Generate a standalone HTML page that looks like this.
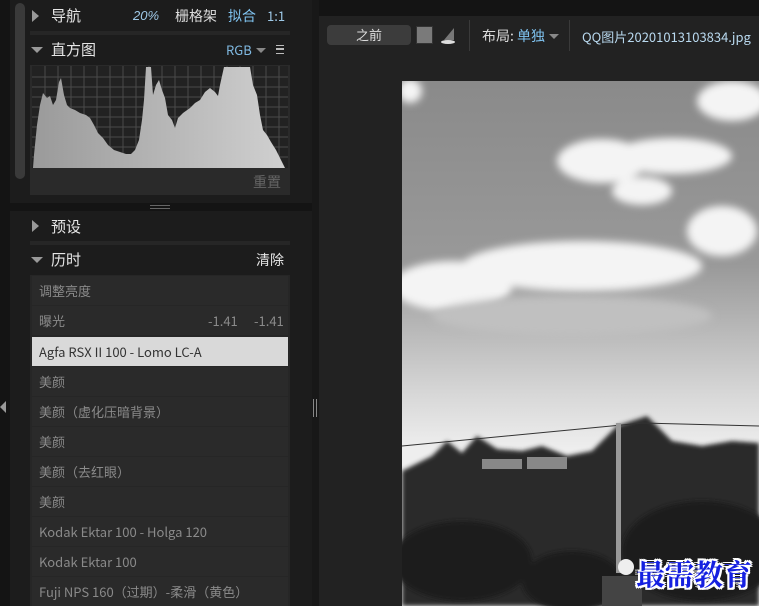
<!DOCTYPE html>
<html><head><meta charset="utf-8"><style>
*{margin:0;padding:0;box-sizing:border-box}
body{width:759px;height:606px;background:#141414;position:relative;overflow:hidden;font-family:"Noto Sans CJK SC","Liberation Sans",sans-serif;color:#ddd}
.a{position:absolute}
.t{font-size:15px;color:#e6e6e6;line-height:20px}
.tri{width:0;height:0;position:absolute}
.row{position:absolute;left:32px;width:256px;height:29px;background:#2a2a2a;font-size:13px;color:#8a8a8a;padding-left:7px;line-height:29px}
</style></head><body>
<div class="a" style="left:10px;top:0;width:302px;height:606px;background:#1c1c1c"></div>
<div class="a" style="left:0;top:0;width:10px;height:606px;background:#141414"></div>
<div class="a" style="left:15px;top:3px;width:10px;height:176px;background:#3a3a3a;border-radius:5px"></div>
<div class="tri" style="left:32px;top:10px;border-left:7px solid #999;border-top:6px solid transparent;border-bottom:6px solid transparent"></div>
<div class="a t" style="left:51px;top:6px">导航</div>
<div class="a" style="left:133px;top:7px;font-size:13px;font-style:italic;color:#9ec8e6;font-family:'Liberation Sans',sans-serif;line-height:18px">20%</div>
<div class="a" style="left:175px;top:6px;font-size:14px;color:#ddd;line-height:20px">栅格架</div>
<div class="a" style="left:228px;top:6px;font-size:14px;color:#7fc3f0;line-height:20px">拟合</div>
<div class="a" style="left:267px;top:7px;font-size:13px;color:#9ec8e6;line-height:18px">1:1</div>
<div class="a" style="left:30px;top:31px;width:260px;height:4px;background:#262626"></div>
<div class="tri" style="left:31px;top:47px;border-top:6px solid #999;border-left:6px solid transparent;border-right:6px solid transparent"></div>
<div class="a t" style="left:51px;top:40px">直方图</div>
<div class="a" style="left:226px;top:41px;font-size:13px;color:#7fb8e0;line-height:18px">RGB</div>
<div class="tri" style="left:256px;top:48px;border-top:5px solid #888;border-left:5px solid transparent;border-right:5px solid transparent"></div>
<div class="a" style="left:276px;top:45px;width:8px;height:9px;border-top:1px solid #bbb;border-bottom:1px solid #bbb"></div>
<div class="a" style="left:276px;top:48px;width:8px;height:2px;border-top:1px solid #bbb;border-bottom:1px solid #bbb"></div>
<div class="a" style="left:30px;top:65px;width:260px;height:130px;background:#2a2a2a"></div>
<svg class="a" style="left:32px;top:66px" width="256" height="102" viewBox="32 66 256 102">
<rect x="32" y="66" width="256" height="102" fill="#222"/>
<g stroke="#4a4a4a" stroke-width="1">
<path d="M32 77H288M32 87H288M32 97H288M32 107H288M32 117H288M32 127H288M32 137H288M32 147H288M32 157H288"/>
<path d="M45 66V168M58 66V168M71 66V168M84 66V168M97 66V168M110 66V168M123 66V168M136 66V168M149 66V168M162 66V168M175 66V168M188 66V168M201 66V168M214 66V168M227 66V168M240 66V168M253 66V168M266 66V168M279 66V168"/>
</g>
<defs><linearGradient id="hg" x1="0" x2="1"><stop offset="0" stop-color="#9a9a9a"/><stop offset="1" stop-color="#d0d0d0"/></linearGradient></defs>
<path fill="url(#hg)" d="M33 168L34 155L37 125L40 105L43 93L47 98L50 96L53 105L56 100L59 82L61 78L64 95L67 105L70 108L75 110L80 113L86 115L90 118L94 125L98 133L103 138L108 145L114 150L120 152L126 154L131 154L135 150L139 140L142 120L144 100L146 67L151 67L153 95L156 85L159 80L162 90L165 98L168 115L172 120L175 128L178 118L183 113L190 108L195 103L200 100L205 92L210 88L215 92L218 96L220 85L224 67L250 67L253 85L257 95L260 115L263 130L267 135L271 142L276 150L281 160L285 168Z"/>
</svg>
<div class="a" style="left:253px;top:172px;font-size:14px;color:#666;line-height:20px">重置</div>
<div class="a" style="left:10px;top:203px;width:302px;height:8px;background:#141414"></div>
<div class="a" style="left:150px;top:205px;width:20px;height:4px;border-top:1px solid #666;border-bottom:1px solid #666"></div>
<div class="tri" style="left:32px;top:220px;border-left:7px solid #999;border-top:6px solid transparent;border-bottom:6px solid transparent"></div>
<div class="a t" style="left:51px;top:217px">预设</div>
<div class="a" style="left:30px;top:241px;width:260px;height:4px;background:#262626"></div>
<div class="tri" style="left:31px;top:257px;border-top:6px solid #999;border-left:6px solid transparent;border-right:6px solid transparent"></div>
<div class="a t" style="left:51px;top:250px">历时</div>
<div class="a" style="left:256px;top:250px;font-size:14px;color:#e6e6e6;line-height:20px">清除</div>
<div class="a" style="left:30px;top:275px;width:260px;height:331px;background:#262626"></div>
<div class="row" style="top:276px">调整亮度</div>
<div class="row" style="top:306px">曝光<span style="position:absolute;left:176px">-1.41</span><span style="position:absolute;left:222px">-1.41</span></div>
<div class="row" style="top:337px;height:29px;background:#d9d9d9;color:#333">Agfa RSX II 100 - Lomo LC-A</div>
<div class="row" style="top:367px">美颜</div>
<div class="row" style="top:397px">美颜（虚化压暗背景）</div>
<div class="row" style="top:427px">美颜</div>
<div class="row" style="top:457px">美颜（去红眼）</div>
<div class="row" style="top:487px">美颜</div>
<div class="row" style="top:517px">Kodak Ektar 100 - Holga 120</div>
<div class="row" style="top:547px">Kodak Ektar 100</div>
<div class="row" style="top:577px">Fuji NPS 160（过期）-柔滑（黄色）</div>
<div class="tri" style="left:0;top:401px;border-right:6px solid #999;border-top:6px solid transparent;border-bottom:6px solid transparent"></div>
<div class="a" style="left:312px;top:0;width:7px;height:606px;background:#181818"></div>
<div class="a" style="left:313px;top:399px;width:4px;height:18px;border-left:1px solid #888;border-right:1px solid #888"></div>
<div class="a" style="left:319px;top:16px;width:440px;height:590px;background:#222"></div>
<div class="a" style="left:327px;top:25px;width:84px;height:20px;background:#3c3c3c;border-radius:4px;font-size:13px;color:#ddd;text-align:center;line-height:20px">之前</div>
<div class="a" style="left:416px;top:26px;width:17px;height:18px;background:#7a7a7a;border:1px solid #333"></div>
<svg class="a" style="left:438px;top:26px" width="20" height="20"><path d="M16 2L16 14L6 14Z" fill="#777"/><ellipse cx="10" cy="16" rx="7" ry="2" fill="#ddd"/></svg>
<div class="a" style="left:469px;top:20px;width:1px;height:31px;background:#3a3a3a"></div>
<div class="a" style="left:482px;top:26px;font-size:14px;color:#ddd;line-height:20px">布局: <span style="color:#7fc3f0">单独</span></div>
<div class="tri" style="left:549px;top:34px;border-top:5px solid #888;border-left:5px solid transparent;border-right:5px solid transparent"></div>
<div class="a" style="left:569px;top:20px;width:1px;height:31px;background:#3a3a3a"></div>
<div class="a" style="left:582px;top:27px;font-size:13px;color:#b8d8ee;line-height:20px">QQ图片20201013103834.jpg</div>
<svg class="a" style="left:402px;top:81px" width="357" height="525">
<defs>
<linearGradient id="sky" x1="0" y1="0" x2="0" y2="1"><stop offset="0" stop-color="#8a8a8a"/><stop offset="0.35" stop-color="#999"/><stop offset="0.6" stop-color="#d8d8d8"/><stop offset="0.7" stop-color="#eee"/></linearGradient>
<filter id="b"><feGaussianBlur stdDeviation="4"/></filter>
<filter id="b2"><feGaussianBlur stdDeviation="2"/></filter>
</defs>
<rect width="357" height="525" fill="url(#sky)"/>
<g filter="url(#b)" fill="#f4f4f4">
<ellipse cx="200" cy="80" rx="45" ry="22"/><ellipse cx="270" cy="75" rx="60" ry="18"/><ellipse cx="240" cy="110" rx="30" ry="14"/>
<ellipse cx="180" cy="185" rx="120" ry="25"/><ellipse cx="50" cy="205" rx="60" ry="25"/><ellipse cx="320" cy="150" rx="35" ry="25"/>
<ellipse cx="8" cy="10" rx="12" ry="12"/><ellipse cx="330" cy="20" rx="35" ry="20"/>
</g>
<g filter="url(#b)" fill="#c0c0c0"><ellipse cx="170" cy="235" rx="140" ry="20"/></g>
<g filter="url(#b2)" fill="#2a2a2a">
<path d="M0 390L30 375L45 360L60 372L75 355L95 368L120 370L140 365L165 375L190 370L215 345L245 335L270 360L300 365L330 360L357 362L357 525L0 525Z"/>
</g>
<g fill="#1c1c1c" filter="url(#b2)"><ellipse cx="60" cy="480" rx="70" ry="40"/><ellipse cx="300" cy="470" rx="80" ry="50"/><ellipse cx="170" cy="500" rx="50" ry="30"/></g>
<g fill="#888"><rect x="80" y="378" width="40" height="10"/><rect x="125" y="376" width="40" height="12"/><rect x="450" y="376" width="40" height="10"/></g>
<path d="M0 365L240 342L357 345" stroke="#333" fill="none"/>
<rect x="214" y="342" width="5" height="150" fill="#999"/>
<circle cx="224" cy="486" r="8" fill="#eee"/>
<rect x="200" y="495" width="40" height="30" fill="#444"/>
</svg>
<div class="a" style="left:636px;top:556px;font-family:'Noto Serif CJK SC',serif;font-size:29px;line-height:36px;font-weight:bold;color:#1520e0;text-shadow:2px 0 #fff,-2px 0 #fff,0 2px #fff,0 -2px #fff,2px 2px #fff,-2px -2px #fff,2px -2px #fff,-2px 2px #fff">最需教育</div>
</body></html>
